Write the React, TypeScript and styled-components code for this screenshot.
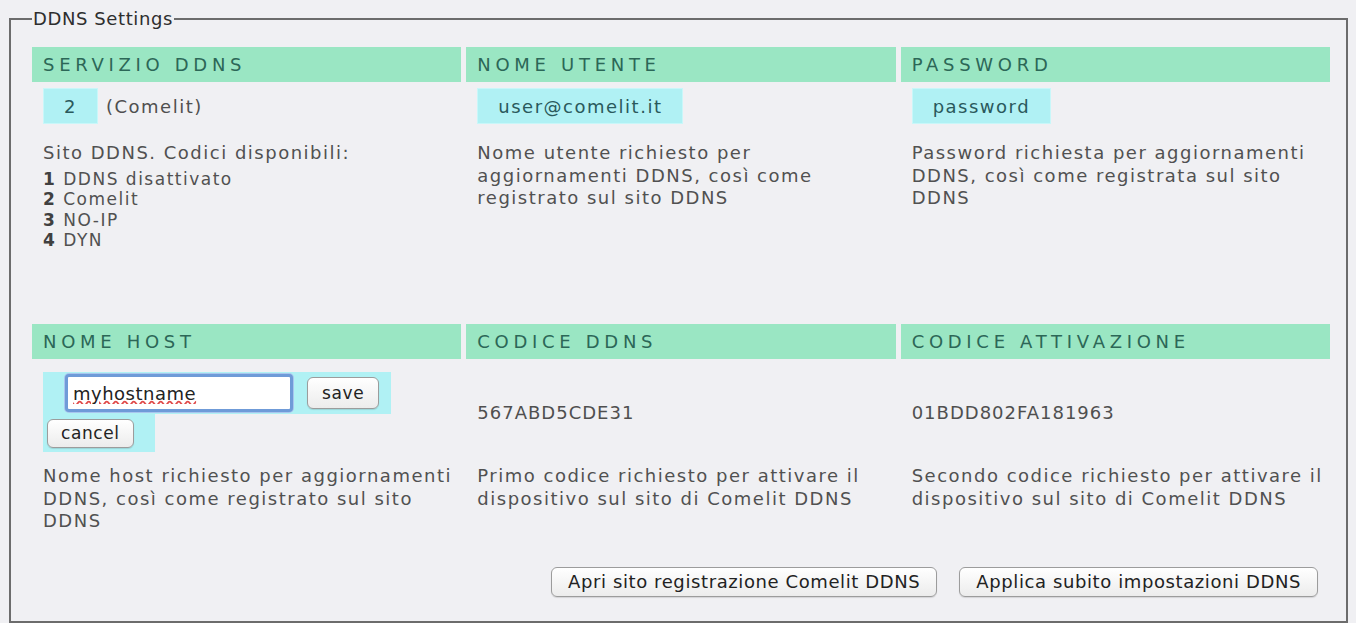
import React from 'react';
import styled, { createGlobalStyle } from 'styled-components';

const GlobalStyle = createGlobalStyle`
  html, body {
    margin: 0;
    padding: 0;
    background: #f0f0f3;
  }
  body {
    font-family: "DejaVu Sans", Verdana, sans-serif;
    color: #555;
  }
`;

const Page = styled.div`
  width: 1356px;
  height: 623px;
  box-sizing: border-box;
  padding-top: 9px;
  overflow: hidden;
`;

const Fieldset = styled.fieldset`
  margin: 0 8px 0 9px;
  padding: 0 16px 24px 21px;
  border: 2px solid #6c6c6c;
  min-width: 0;
`;

const Legend = styled.legend`
  padding: 0 1px;
  font-size: 18px;
  line-height: 20px;
  letter-spacing: 0.6px;
  color: #2e2e2e;
`;

const Grid = styled.div`
  display: grid;
  grid-template-columns: repeat(3, 1fr);
  column-gap: 5px;
  margin-top: 18px;
`;

const HeaderCell = styled.div`
  height: 35px;
  display: flex;
  align-items: center;
  padding-left: 11px;
  background: #9ae6c3;
  color: #2c6757;
  font-size: 18px;
  letter-spacing: 4.7px;
  white-space: nowrap;
`;

const ValueCell = styled.div<{ $height: number }>`
  height: ${p => p.$height}px;
  display: flex;
  align-items: center;
  padding-left: 11px;
  font-size: 18px;
  letter-spacing: 1px;
  color: #4f4f4f;
`;

const ValueBox = styled.span`
  height: 36px;
  display: inline-flex;
  align-items: center;
  padding: 0 20px;
  box-sizing: border-box;
  background: #b0f1f4;
  border: 1px solid #c9f7f9;
  color: #2a595c;
  font-size: 18px;
  letter-spacing: 1.5px;
`;

const Note = styled.span`
  margin-left: 8px;
  letter-spacing: 1.5px;
`;

const DescCell = styled.div<{ $height?: number; $top?: number }>`
  ${p => (p.$height ? `height: ${p.$height}px;` : '')}
  padding: ${p => p.$top ?? 0}px 0 0 11px;
  font-size: 18px;
  line-height: 22.5px;
  letter-spacing: 1.5px;
  white-space: nowrap;
  color: #515151;
`;

const CodeList = styled.div`
  margin-top: 4px;
  line-height: 20.5px;
  font-size: 17px;
`;

const Code = styled.b`
  font-weight: bold;
  color: #404040;
`;

const HostEditor = styled.div`
  display: flex;
  flex-direction: column;
  align-items: flex-start;
`;

const HostLine = styled.div<{ $pad: string; $height: number }>`
  display: flex;
  align-items: center;
  gap: 14px;
  height: ${p => p.$height}px;
  padding: ${p => p.$pad};
  background: #b0f1f4;
  box-sizing: border-box;
`;

const HostInput = styled.input`
  width: 228px;
  height: 38px;
  box-sizing: border-box;
  padding: 0 5px;
  border: 3px solid #6f9bd8;
  border-radius: 4px;
  box-shadow: 0 0 0 1px #a9c6ee;
  background: #fff;
  font-family: "DejaVu Sans", Verdana, sans-serif;
  font-size: 18px;
  letter-spacing: 0.5px;
  color: #222;
  text-decoration: underline wavy #e04a4a;
  outline: none;
`;

const Button = styled.button<{ $height: number; $pad: number; $size: number }>`
  height: ${p => p.$height}px;
  padding: 0 ${p => p.$pad}px;
  border: 1px solid #9c9c9c;
  border-radius: 6px;
  background: linear-gradient(#ffffff, #ececec);
  box-shadow: 0 1px 1px rgba(0, 0, 0, 0.12);
  font-family: "DejaVu Sans", Verdana, sans-serif;
  font-size: ${p => p.$size}px;
  letter-spacing: 0.6px;
  color: #222;
  white-space: nowrap;
  cursor: pointer;
`;

const Actions = styled.div`
  display: flex;
  justify-content: flex-end;
  gap: 22px;
  margin-top: 34px;
  padding-right: 12px;
`;

export default function App() {
  return (
    <Page>
      <GlobalStyle />
      <Fieldset>
        <Legend>DDNS Settings</Legend>
        <Grid>
          <HeaderCell>SERVIZIO DDNS</HeaderCell>
          <HeaderCell>NOME UTENTE</HeaderCell>
          <HeaderCell>PASSWORD</HeaderCell>

          <ValueCell $height={48}>
            <ValueBox>2</ValueBox>
            <Note>(Comelit)</Note>
          </ValueCell>
          <ValueCell $height={48}>
            <ValueBox>user@comelit.it</ValueBox>
          </ValueCell>
          <ValueCell $height={48}>
            <ValueBox>password</ValueBox>
          </ValueCell>

          <DescCell $height={182} $top={12}>
            Sito DDNS. Codici disponibili:
            <CodeList>
              <Code>1</Code> DDNS disattivato<br />
              <Code>2</Code> Comelit<br />
              <Code>3</Code> NO-IP<br />
              <Code>4</Code> DYN
            </CodeList>
          </DescCell>
          <DescCell $height={182} $top={12}>
            Nome utente richiesto per<br />
            aggiornamenti DDNS, così come<br />
            registrato sul sito DDNS
          </DescCell>
          <DescCell $height={182} $top={12}>
            Password richiesta per aggiornamenti<br />
            DDNS, così come registrata sul sito<br />
            DDNS
          </DescCell>

          <HeaderCell>NOME HOST</HeaderCell>
          <HeaderCell>CODICE DDNS</HeaderCell>
          <HeaderCell>CODICE ATTIVAZIONE</HeaderCell>

          <ValueCell $height={106}>
            <HostEditor>
              <HostLine $pad="0 12px 0 22px" $height={42}>
                <HostInput defaultValue="myhostname" spellCheck={false} />
                <Button $height={32} $pad={14} $size={17}>save</Button>
              </HostLine>
              <HostLine $pad="0 21px 0 4px" $height={38}>
                <Button $height={29} $pad={13} $size={17}>cancel</Button>
              </HostLine>
            </HostEditor>
          </ValueCell>
          <ValueCell $height={106}>567ABD5CDE31</ValueCell>
          <ValueCell $height={106}>01BDD802FA181963</ValueCell>

          <DescCell>
            Nome host richiesto per aggiornamenti<br />
            DDNS, così come registrato sul sito<br />
            DDNS
          </DescCell>
          <DescCell>
            Primo codice richiesto per attivare il<br />
            dispositivo sul sito di Comelit DDNS
          </DescCell>
          <DescCell>
            Secondo codice richiesto per attivare il<br />
            dispositivo sul sito di Comelit DDNS
          </DescCell>
        </Grid>
        <Actions>
          <Button $height={30} $pad={16} $size={18}>Apri sito registrazione Comelit DDNS</Button>
          <Button $height={30} $pad={16} $size={18}>Applica subito impostazioni DDNS</Button>
        </Actions>
      </Fieldset>
    </Page>
  );
}
